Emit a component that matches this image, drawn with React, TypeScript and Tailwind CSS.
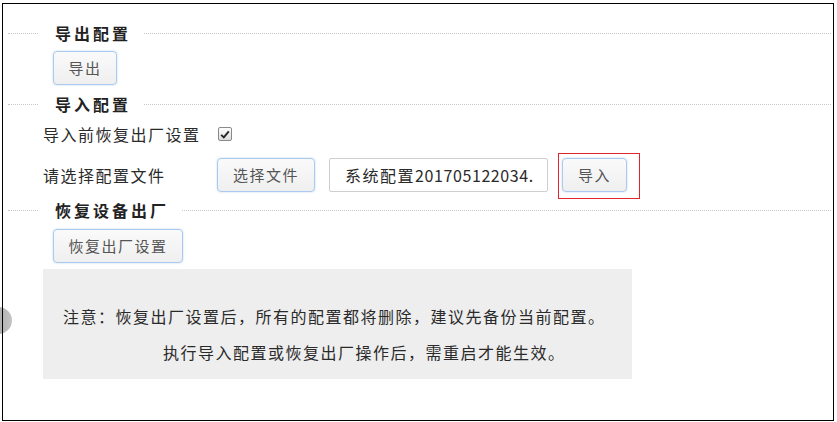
import React from "react"

const font = { fontFamily: '"Noto Sans CJK SC", "Noto Sans", sans-serif' }

function Legend({ title }: { title: string }) {
  return (
    <div className="flex items-center h-[24px] pl-[5px] pr-[2px]">
      <div className="w-[30px] border-t border-dotted border-[#c8c8c8]" />
      <span className="pl-[17px] pr-[13px] text-[16px] font-bold tracking-[3px] text-[#222] leading-none">{title}</span>
      <div className="flex-1 border-t border-dotted border-[#c8c8c8]" />
    </div>
  )
}

function Btn({ label, w }: { label: string; w: string }) {
  return (
    <button
      className={`${w} h-[34px] rounded-[4px] border border-[#a9c9ee] bg-gradient-to-b from-[#fafafa] to-[#efefef] text-[15px] tracking-[1.5px] text-[#555] shadow-[0_0_2px_rgba(120,170,230,0.5)]`}
    >
      {label}
    </button>
  )
}

export default function App() {
  return (
    <div className="relative w-[837px] h-[422px] bg-white overflow-hidden" style={font}>
      {/* scroll knob peeking from the left */}
      <div className="absolute left-[-15px] top-[307px] w-[27px] h-[27px] rounded-full bg-gradient-to-r from-[#9a9a9a] to-[#c4c4c4]" />

      <div className="relative ml-[2px] pt-[3px]">
        <div className="w-[832px] h-[418px] border border-black flex flex-col pt-[17px]">
          <Legend title="导出配置" />
          <div className="mt-[6px] ml-[50px]">
            <Btn label="导出" w="w-[64px]" />
          </div>

          <div className="mt-[7px]">
            <Legend title="导入配置" />
          </div>
          <div className="mt-[6px] ml-[40px] h-[24px] flex items-center text-[16px] tracking-[1.5px] text-[#2a2a2a]">
            <span className="w-[175px]">导入前恢复出厂设置</span>
            <span className="w-[14px] h-[14px] rounded-[2px] border border-[#8a8a8a] bg-gradient-to-b from-[#fdfdfd] to-[#dcdcdc] flex items-center justify-center">
              <svg width="10" height="9" viewBox="0 0 10 9">
                <path d="M1.2 4.8 L3.8 7.4 L8.8 1.3" fill="none" stroke="#222" strokeWidth="1.9" />
              </svg>
            </span>
          </div>

          <div className="mt-[12px] ml-[40px] flex items-center text-[16px] tracking-[1.5px] text-[#2a2a2a]">
            <span className="w-[174px]">请选择配置文件</span>
            <Btn label="选择文件" w="w-[98px]" />
            <div className="ml-[14px] w-[219px] h-[34px] border border-[#cfcfcf] rounded-[2px] pl-[15px] flex items-center overflow-hidden whitespace-nowrap">
              系统配置<span className="tracking-[0.6px]">201705122034.</span>
            </div>
            <div className="relative ml-[14px]">
              <Btn label="导入" w="w-[65px]" />
              <span className="absolute -left-[4px] -top-[5px] -right-[13px] -bottom-[7px] border border-[#e0262a] pointer-events-none" />
            </div>
          </div>

          <div className="mt-[6px]">
            <Legend title="恢复设备出厂" />
          </div>
          <div className="mt-[7px] ml-[50px]">
            <Btn label="恢复出厂设置" w="w-[130px]" />
          </div>

          <div className="mt-[6px] ml-[40px] w-[589px] h-[110px] bg-[#eeeeee] pt-[29px] text-[16px] tracking-[1.5px] text-[#2a2a2a] leading-[36px]">
            <p className="pl-[20px] whitespace-nowrap">注意：恢复出厂设置后，所有的配置都将删除，建议先备份当前配置。</p>
            <p className="pl-[120px] whitespace-nowrap">执行导入配置或恢复出厂操作后，需重启才能生效。</p>
          </div>
        </div>
      </div>
    </div>
  )
}
